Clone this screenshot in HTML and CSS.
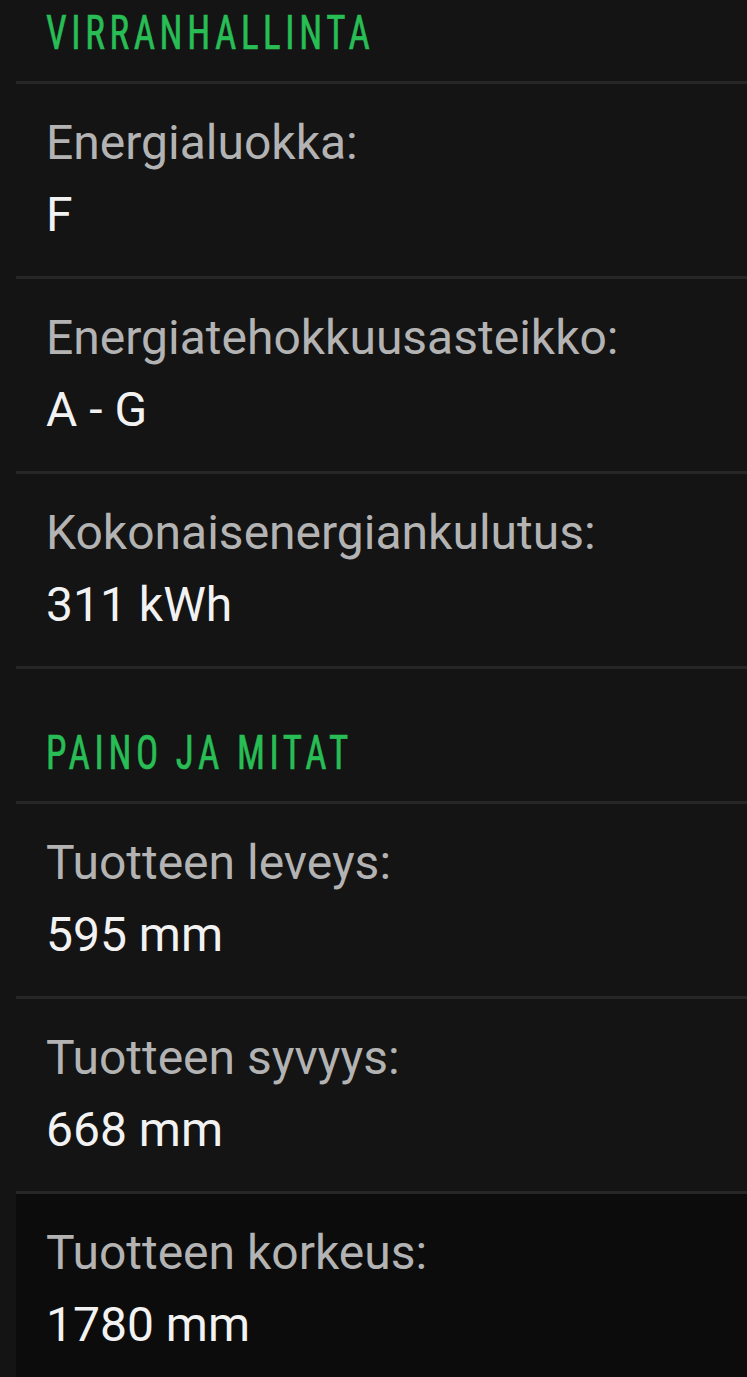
FILE: index.html
```html
<!DOCTYPE html>
<html lang="fi">
<head>
    <meta charset="utf-8">
    <title>Tekniset tiedot</title>
    <meta name="viewport" content="width=device-width, initial-scale=1">
    <link rel="stylesheet" href="styles.css">
</head>
<body>
    <main class="specs">
        <h2 class="sh"><span>VIRRANHALLINTA</span></h2>
        <div class="sr">
            <div class="sl">Energialuokka:</div>
            <div class="sv">F</div>
        </div>
        <div class="sr">
            <div class="sl">Energiatehokkuusasteikko:</div>
            <div class="sv">A - G</div>
        </div>
        <div class="sr">
            <div class="sl">Kokonaisenergiankulutus:</div>
            <div class="sv">311 kWh</div>
        </div>

        <h2 class="sh"><span>PAINO JA MITAT</span></h2>
        <div class="sr">
            <div class="sl">Tuotteen leveys:</div>
            <div class="sv">595 mm</div>
        </div>
        <div class="sr">
            <div class="sl">Tuotteen syvyys:</div>
            <div class="sv">668 mm</div>
        </div>
        <div class="sr sr-d">
            <div class="sl">Tuotteen korkeus:</div>
            <div class="sv">1780 mm</div>
        </div>
    </main>
</body>
</html>
```

FILE: styles.css
```css
/* Variables */
:root {
    --bg: #141414;
    --dk: #0c0c0c;
    --ln: #262626;
    --gr: #28bd55;
    --lb: #b3b3b3;
    --tx: #f2f2f2;
}

html, body {
    margin: 0;
    padding: 0;
    background-color: var(--bg);
    overflow: hidden;
}

/* Lista */
.specs {
    margin: -54px 0 0 16px;
    font-family: Roboto, "Noto Sans", sans-serif;
}

.sh {
    margin: 0;
    height: 135px;
    box-sizing: border-box;
    padding: 0 30px 24px;
    display: flex;
    align-items: flex-end;
    font-family: "Roboto Condensed", "Liberation Sans Narrow", sans-serif;
    font-weight: normal;
    font-size: 48px;
    line-height: 1;
    letter-spacing: 6px;
    color: var(--gr);
    -webkit-text-stroke: 0.7px var(--gr);
    border-top: 3px solid var(--ln);
}

/* titulares más estrechos */
.sh span {
    display: inline-block;
    transform: scaleX(0.77);
    transform-origin: left bottom;
    white-space: nowrap;
}

.sh:first-child {
    border-top: none;
}

.sr {
    border-top: 3px solid var(--ln);
    padding: 23px 30px 25px;
    font-size: 48px;
    line-height: 72px;
}

.sr-d {
    background-color: var(--dk);
    padding-bottom: 60px;
}

.sl {
    color: var(--lb);
}

.sv {
    color: var(--tx);
}
```
